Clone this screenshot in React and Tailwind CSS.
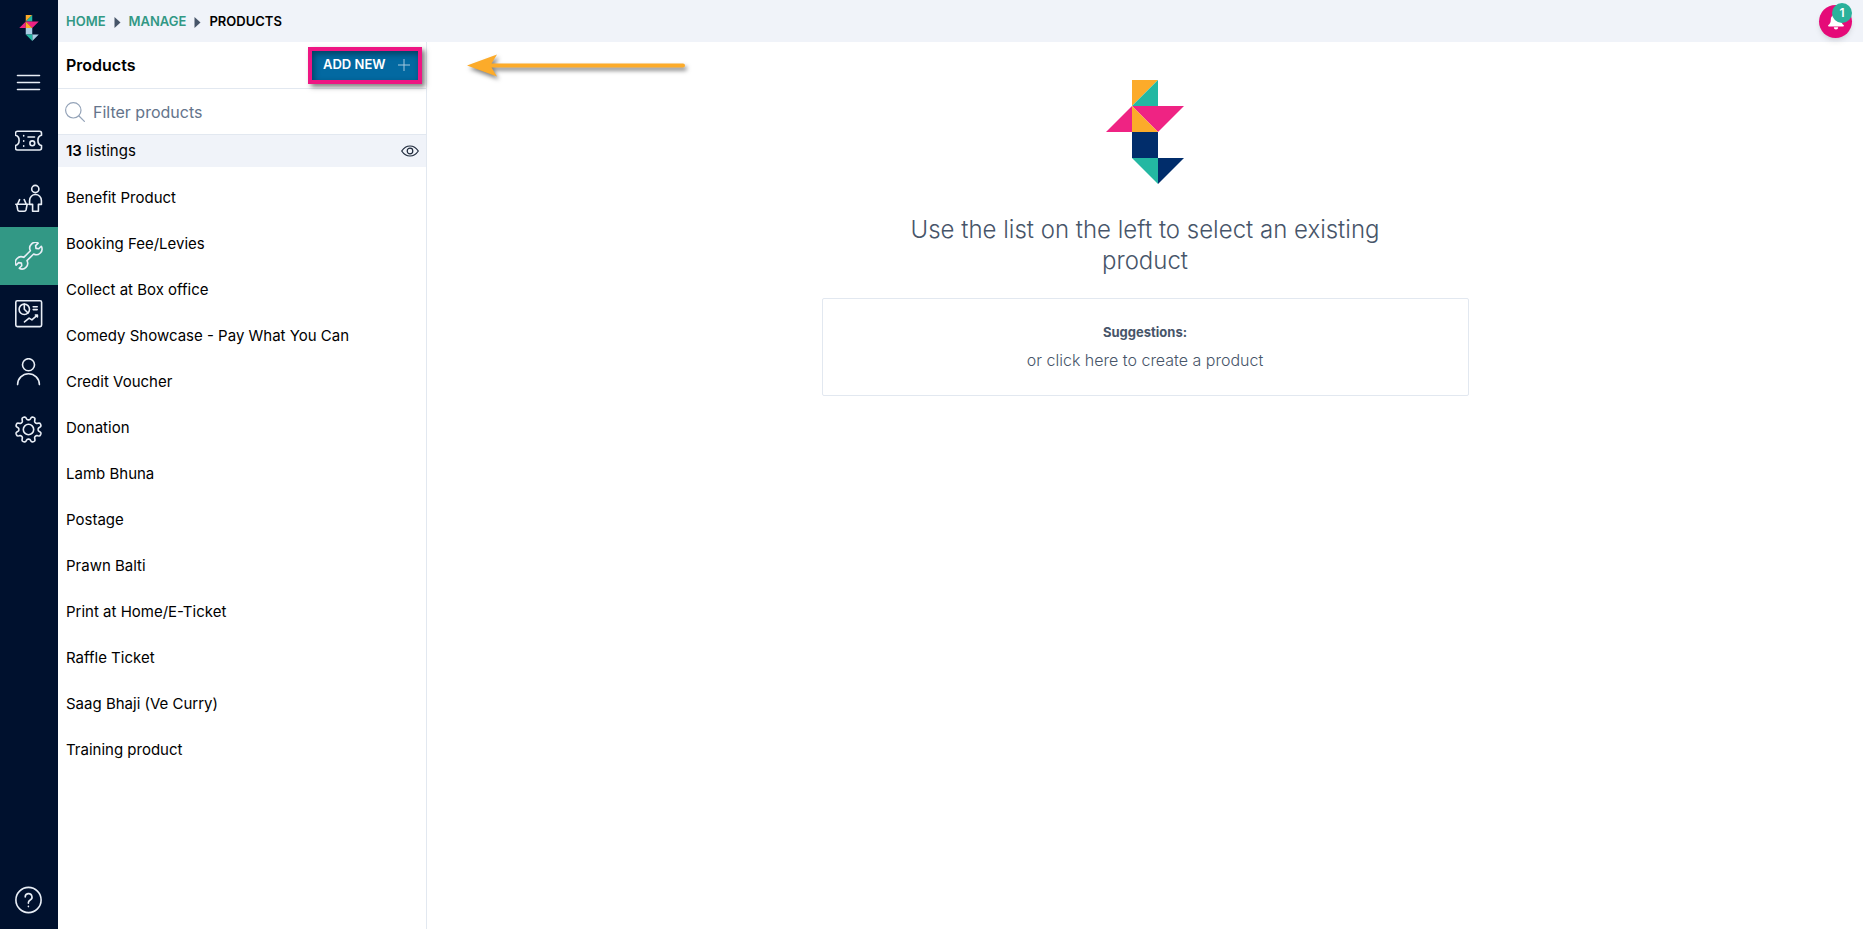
import React from "react";

const products = [
  "Benefit Product",
  "Booking Fee/Levies",
  "Collect at Box office",
  "Comedy Showcase - Pay What You Can",
  "Credit Voucher",
  "Donation",
  "Lamb Bhuna",
  "Postage",
  "Prawn Balti",
  "Print at Home/E-Ticket",
  "Raffle Ticket",
  "Saag Bhaji (Ve Curry)",
  "Training product",
];

function Icon({ children }) {
  return (
    <svg
      width="28"
      height="28"
      viewBox="0 0 28 28"
      fill="none"
      stroke="currentColor"
      strokeWidth="1.6"
      strokeLinecap="round"
      strokeLinejoin="round"
      aria-hidden="true"
    >
      {children}
    </svg>
  );
}

// Wavy outline of the settings cog
function cogPath() {
  const points = [];
  for (let i = 0; i < 160; i++) {
    const a = (i / 160) * Math.PI * 2;
    const r = 11.4 + 1.8 * Math.tanh(2 * Math.cos(8 * a + Math.PI));
    points.push(`${(13.5 + r * Math.cos(a)).toFixed(2)} ${(13.5 + r * Math.sin(a)).toFixed(2)}`);
  }
  return `M${points.join("L")}Z`;
}

const navItems = [
  {
    label: "Menu",
    icon: <path d="M2.5 7.5h22M2.5 14.5h22M2.5 21.5h22" />,
  },
  {
    label: "Events",
    icon: (
      <>
        <path d="M2.5 5.2h22a2 2 0 0 1 2 2v2c-2.6.6-3.6 2.6-3.6 5s1 4.8 3.6 5.3v2.5a2 2 0 0 1-2 2h-22a2 2 0 0 1-2-2v-2.5c2.6-.6 3.6-2.6 3.6-5.3s-1-4.4-3.6-5v-2a2 2 0 0 1 2-2z" />
        <path d="M8.7 9.6v.4M8.7 14.8v.4M8.7 19.8v.4" />
        <path d="M13 11h6.5" />
        <circle cx="17.3" cy="17.3" r="2.4" />
      </>
    ),
  },
  {
    label: "Sell",
    icon: (
      <>
        <circle cx="20.3" cy="5" r="3.6" />
        <path d="M17.6 27.2v-6.8h-3v-4a5.9 5.9 0 0 1 11.8 0v4h-3v6.8z" />
        <path d="M.8 20.3h12.4M1.7 20.5l1 5.2a2 2 0 0 0 2 1.5h4.4a2 2 0 0 0 2-1.500l1-5.200M2.600 20l2-4.300M11.200 20l-2-4.300" />
      </>
    ),
  },
  {
    label: "Manage",
    active: true,
    icon: (
      <path
        transform="rotate(-45 13.7 13.7)"
        d="M9 11.4H18.4A5.7 5.7 0 0 1 29.3 11.5H25.7L24 13.7L25.7 15.9H29.3A5.7 5.7 0 0 1 18.4 16H9A5.7 5.7 0 0 1-1.9 15.9H1.7L3.4 13.7L1.7 11.5H-1.9A5.7 5.7 0 0 1 9 11.4Z"
      />
    ),
  },
  {
    label: "Reports",
    icon: (
      <>
        <rect x=".8" y=".8" width="25.8" height="25.8" rx="1.5" />
        <circle cx="9.3" cy="9.3" r="5.2" />
        <path d="M9.3 4.1v5.2l3.7 3.7M18.2 6.7h4M18.2 9.6h4M9.5 21.9l4.6-3.8 2.8 1.8 5.4-4.800M20.400 15h2v2" />
      </>
    ),
  },
  {
    label: "Customers",
    icon: (
      <>
        <circle cx="13.5" cy="6.7" r="6" />
        <path d="M2.6 26.6a10.9 10.9 0 0 1 21.8 0" />
      </>
    ),
  },
  {
    label: "Settings",
    icon: (
      <>
        <path d={cogPath()} />
        <circle cx="13.5" cy="13.5" r="5.2" />
      </>
    ),
  },
];

function Logo({ className, base }) {
  return (
    <svg className={className} viewBox="0 0 30 40" aria-hidden="true">
      <path fill="#fcab2a" d="M10 0h10L10 10z" />
      <path fill="#23b8a2" d="M20 0v10H10z" />
      <path fill="#ef2383" d="M10 10v10H0zM10 10h20L20 20z" />
      <path fill="#fcab2a" d="M10 10l10 10H10z" />
      <path fill={base} d="M10 20h10v10H10zM20 30h10L20 40z" />
      <path fill="#23b8a2" d="M10 30h10v10z" />
    </svg>
  );
}

function Sidebar() {
  return (
    <nav className="flex flex-col w-[58px] shrink-0 bg-[#00112e] text-[#e8eef6]">
      <a href="#" aria-label="Dashboard" className="flex justify-center h-[53px] pt-[15px]">
        <Logo className="w-5 h-[26px]" base="#a9cce3" />
      </a>
      {navItems.map((item) => (
        <a
          key={item.label}
          href="#"
          aria-label={item.label}
          className={
            item.active
              ? "flex items-center justify-center h-[58px] bg-[#329885]"
              : "flex items-center justify-center h-[58px]"
          }
        >
          <Icon>{item.icon}</Icon>
        </a>
      ))}
      <a href="#" aria-label="Help" className="flex items-center justify-center h-[58px] mt-auto">
        <Icon>
          <circle cx="13.5" cy="14" r="12.6" />
          <path d="M10.2 11a3.4 3.4 0 1 1 5 3c-1.2.7-1.8 1.3-1.8 2.6v.6M13.4 20.2v.4" />
        </Icon>
      </a>
    </nav>
  );
}

function Separator() {
  return (
    <svg className="w-[7px] h-[11px] text-[#475569]" viewBox="0 0 7 11" aria-hidden="true">
      <path fill="currentColor" d="M.5 0L6.500 5.500.5 11z" />
    </svg>
  );
}

function Header() {
  return (
    <header className="flex items-center justify-between h-[42px] pl-2 pr-[11px] bg-[#f0f3f9]">
      <nav aria-label="Breadcrumb" className="flex items-center gap-2 pt-0.5 text-[13px] font-semibold">
        <a href="#" className="text-[#329885]">HOME</a>
        <Separator />
        <a href="#" className="text-[#329885]">MANAGE</a>
        <Separator />
        <span className="text-black">PRODUCTS</span>
      </nav>
      <button
        type="button"
        aria-label="Notifications"
        className="relative flex items-center justify-center w-[33px] h-[33px] rounded-full bg-[#e50a78] shadow-md"
      >
        <svg className="w-5 h-5" viewBox="0 0 20 20" fill="#fff" aria-hidden="true">
          <path d="M10 2a1.200 1.200 0 0 1 1.200 1.200v.6a5 5 0 0 1 4 5c0 3 1 4.200 2.400 5.200.6.5.3 1.500-.5 1.500H2.900c-.8 0-1.100-1-.5-1.500 1.400-1 2.400-2.200 2.400-5.200a5 5 0 0 1 4-5v-.6A1.200 1.200 0 0 1 10 2zM7.800 16.300h4.400a2.200 2.200 0 0 1-4.400 0z" />
        </svg>
        <span className="absolute -top-0.5 right-0 w-5 h-5 rounded-full bg-[#2bb19b] text-white text-xs leading-5 font-semibold text-center">
          1
        </span>
      </button>
    </header>
  );
}

function ProductList() {
  return (
    <section className="flex flex-col w-[369px] shrink-0 border-r border-[#e2e8f0]">
      <div className="flex items-center justify-between h-[47px] pl-2 pr-1 border-b border-[#e2e8f0]">
        <h1 className="text-base font-semibold text-black">Products</h1>
        <button
          type="button"
          className="flex items-center justify-between w-[114px] h-[37px] pl-[11px] pr-2 border-4 border-[#ee1683] bg-[#0369a1] text-white text-[13px] font-semibold shadow-[3px_3px_5px_rgba(0,0,0,0.5),inset_2px_3px_6px_rgba(0,0,0,0.4)]"
        >
          ADD NEW
          <svg className="w-3 h-3 text-[#a5c9de]" viewBox="0 0 12 12" stroke="currentColor" aria-hidden="true">
            <path d="M6 0v12M0 6h12" />
          </svg>
        </button>
      </div>

      <label className="flex items-center gap-2 h-[46px] px-[7px] border-b border-[#e2e8f0]">
        <svg className="w-5 h-5 text-[#94a3b8]" viewBox="0 0 20 20" fill="none" stroke="currentColor" strokeWidth="1.2" strokeLinecap="round" aria-hidden="true">
          <circle cx="8.3" cy="8.3" r="7.700" />
          <path d="M14 14l5.400 5.400" />
        </svg>
        <input
          type="text"
          aria-label="Filter products"
          placeholder="Filter products"
          className="grow min-w-0 text-base text-black placeholder:text-[#64748b] outline-none"
        />
      </label>

      <div className="flex items-center justify-between h-8 pl-2 pr-[7px] bg-[#f0f3f9]">
        <p className="text-[15px] text-black">
          <span className="font-semibold">13</span> listings
        </p>
        <button type="button" aria-label="Show hidden products">
          <svg className="w-[18px] h-3 text-[#1e293b]" viewBox="0 0 18 12" fill="none" stroke="currentColor" strokeWidth="1.2" aria-hidden="true">
            <path d="M.7 6C2.7 3 5.6 1 9 1s6.3 2 8.3 5c-2 3-4.9 5-8.3 5S2.7 9 .7 6z" />
            <circle cx="9" cy="6" r="2.8" />
          </svg>
        </button>
      </div>

      <ul className="pt-2">
        {products.map((product) => (
          <li key={product}>
            <a href="#" className="flex items-center h-[46px] px-2 text-[15px] text-black">
              {product}
            </a>
          </li>
        ))}
      </ul>
    </section>
  );
}

function EmptyState() {
  return (
    <main className="relative grow flex flex-col items-center px-6 pt-[38px] text-[#475569]">
      {/* Arrow pointing at the add button */}
      <svg className="absolute left-10 top-2 w-[224px] h-9 drop-shadow-[2px_3px_2px_rgba(0,0,0,0.5)]" viewBox="0 0 224 36" aria-hidden="true">
        <path fill="#fcab2a" d="M0 15.5L30 4.5l-5.500 9H216a2 2 0 0 1 0 4H24.500l5.500 9z" />
      </svg>

      <Logo className="w-[78px] h-[104px]" base="#012d6b" />
      <h2 className="w-full max-w-[486px] mt-[30px] text-[24px] leading-[31px] font-light text-center">
        Use the list on the left to select an existing product
      </h2>
      <div className="w-full max-w-[647px] mt-[22px] pt-[21px] pb-[23px] border border-[#e2e8f0] rounded-xs text-center">
        <h3 className="text-[13px] leading-6 font-bold">Suggestions:</h3>
        <p className="mt-1 text-base leading-6 font-light">
          or{" "}
          <a href="#">click here to create a product</a>
        </p>
      </div>
    </main>
  );
}

export default function App() {
  return (
    <div className="flex min-h-screen bg-white font-[Inter,sans-serif]">
      <Sidebar />
      <div className="flex flex-col grow min-w-0">
        <Header />
        <div className="flex grow">
          <ProductList />
          <EmptyState />
        </div>
      </div>
    </div>
  );
}
